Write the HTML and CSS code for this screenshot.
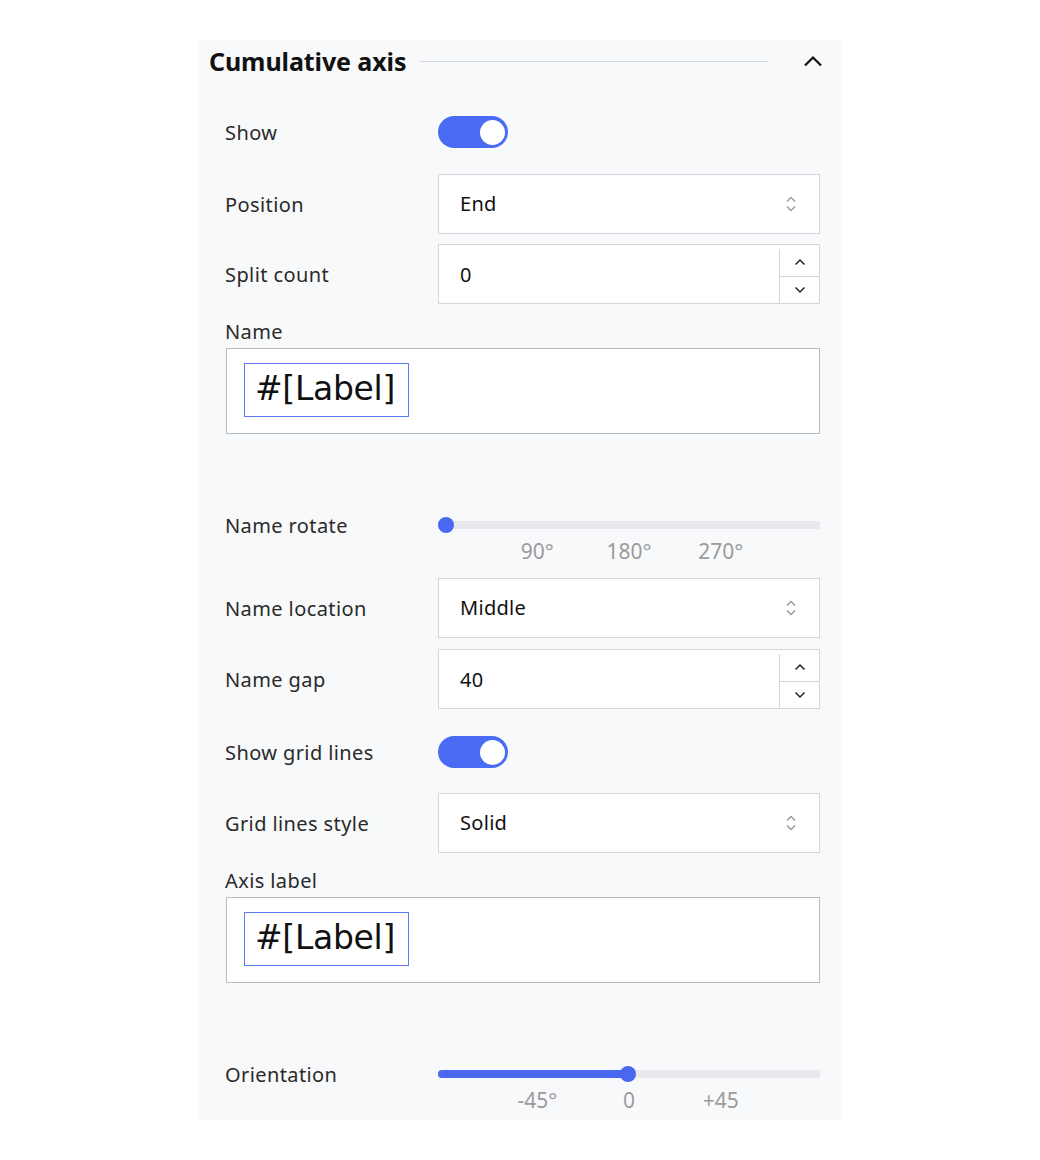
FILE: index.html
```html
<!DOCTYPE html>
<html>
<head>
<meta charset="utf-8">
<link rel="stylesheet" href="styles.css">
</head>
<body>
<div class="panel">
  <div class="header">
    <span class="title">Cumulative axis</span>
    <span class="rule"></span>
    <svg class="collapse" width="20" height="12" viewBox="0 0 20 12"><path d="M2 10.5 L10 2.5 L18 10.5" fill="none" stroke="#111" stroke-width="2.2"/></svg>
  </div>

  <div class="row r-show">
    <span class="label">Show</span>
    <span class="toggle"><span class="knob"></span></span>
  </div>

  <div class="row r-ctl r-position">
    <span class="label">Position</span>
    <div class="select">
      <span class="value">End</span>
      <svg class="updown" width="12" height="18" viewBox="0 0 12 18"><path d="M2 6.5 L6 2.5 L10 6.5 M2 11.5 L6 15.5 L10 11.5" fill="none" stroke="#9a9a9a" stroke-width="1.4"/></svg>
    </div>
  </div>

  <div class="row r-ctl r-split">
    <span class="label">Split count</span>
    <div class="number">
      <span class="value">0</span>
      <div class="spin">
        <span class="step"><svg width="12" height="8" viewBox="0 0 12 8"><path d="M1.5 6.5 L6 2 L10.5 6.5" fill="none" stroke="#222" stroke-width="1.5"/></svg></span>
        <span class="step"><svg width="12" height="8" viewBox="0 0 12 8"><path d="M1.5 1.5 L6 6 L10.5 1.5" fill="none" stroke="#222" stroke-width="1.5"/></svg></span>
      </div>
    </div>
  </div>

  <div class="stack-label r-name">Name</div>
  <div class="textbox"><span class="token">#[Label]</span></div>

  <div class="row r-slider r-rotate">
    <span class="label">Name rotate</span>
    <div class="slider">
      <span class="track"></span>
      <span class="thumb" style="left:2%"></span>
    </div>
  </div>
  <div class="ticks">
    <div class="tickarea">
      <span class="tick" style="left:26%">90°</span>
      <span class="tick" style="left:50%">180°</span>
      <span class="tick" style="left:74%">270°</span>
    </div>
  </div>

  <div class="row r-ctl r-location">
    <span class="label">Name location</span>
    <div class="select">
      <span class="value">Middle</span>
      <svg class="updown" width="12" height="18" viewBox="0 0 12 18"><path d="M2 6.5 L6 2.5 L10 6.5 M2 11.5 L6 15.5 L10 11.5" fill="none" stroke="#9a9a9a" stroke-width="1.4"/></svg>
    </div>
  </div>

  <div class="row r-ctl r-gap">
    <span class="label">Name gap</span>
    <div class="number">
      <span class="value">40</span>
      <div class="spin">
        <span class="step"><svg width="12" height="8" viewBox="0 0 12 8"><path d="M1.5 6.5 L6 2 L10.5 6.5" fill="none" stroke="#222" stroke-width="1.5"/></svg></span>
        <span class="step"><svg width="12" height="8" viewBox="0 0 12 8"><path d="M1.5 1.5 L6 6 L10.5 1.5" fill="none" stroke="#222" stroke-width="1.5"/></svg></span>
      </div>
    </div>
  </div>

  <div class="row r-grid">
    <span class="label">Show grid lines</span>
    <span class="toggle"><span class="knob"></span></span>
  </div>

  <div class="row r-ctl r-style">
    <span class="label">Grid lines style</span>
    <div class="select">
      <span class="value">Solid</span>
      <svg class="updown" width="12" height="18" viewBox="0 0 12 18"><path d="M2 6.5 L6 2.5 L10 6.5 M2 11.5 L6 15.5 L10 11.5" fill="none" stroke="#9a9a9a" stroke-width="1.4"/></svg>
    </div>
  </div>

  <div class="stack-label r-axis">Axis label</div>
  <div class="textbox"><span class="token">#[Label]</span></div>

  <div class="row r-slider r-orient">
    <span class="label">Orientation</span>
    <div class="slider">
      <span class="track"></span>
      <span class="fill" style="width:49.7%"></span>
      <span class="thumb" style="left:49.7%"></span>
    </div>
  </div>
  <div class="ticks">
    <div class="tickarea">
      <span class="tick" style="left:26%">-45°</span>
      <span class="tick" style="left:50%">0</span>
      <span class="tick" style="left:74%">+45</span>
    </div>
  </div>
</div>
</body>
</html>
```

FILE: styles.css
```css
* { box-sizing: border-box; }
html, body { margin: 0; padding: 0; background: #ffffff; }
body {
  font-family: "Noto Sans", "DejaVu Sans", sans-serif;
  color: #2a2a2a;
}
.panel {
  margin: 40px 0 0 198px;
  width: 644px;
  height: 1080px;
  background: #f8f9fb;
  padding: 0 22px 0 27px;
  display: flex;
  flex-direction: column;
}
.header {
  height: 42px;
  margin-left: -16px;
  margin-right: -3px;
  display: flex;
  align-items: center;
}
.title {
  font-size: 25px;
  font-weight: 700;
  color: #111;
  letter-spacing: -0.1px;
}
.rule {
  flex: 1;
  height: 1px;
  background: #d2d5da;
  margin: 0 35px 0 14px;
}
.collapse { display: block; }

.row {
  display: flex;
  align-items: center;
}
.label {
  width: 213px;
  flex: none;
  font-size: 20px;
  letter-spacing: 0.4px;
  color: #2a2a2a;
}
.r-show { height: 32px; margin-top: 34px; }
.r-position { margin-top: 26px; }
.r-split { margin-top: 10px; }
.r-location { margin-top: 16px; }
.r-gap { margin-top: 11px; }
.r-grid { height: 32px; margin-top: 27px; }
.r-style { margin-top: 25px; }

.toggle {
  width: 70px;
  height: 32px;
  border-radius: 16px;
  background: #4a6cf4;
  display: flex;
  align-items: center;
  justify-content: flex-end;
  padding-right: 3px;
}
.knob {
  width: 25px;
  height: 25px;
  border-radius: 50%;
  background: #fff;
}

.r-ctl { height: 60px; }
.select, .number {
  flex: 1;
  height: 100%;
  background: #fff;
  border: 1px solid #d3d6db;
  display: flex;
  align-items: center;
}
.select { padding: 0 22px 0 21px; justify-content: space-between; }
.number { padding-left: 21px; }
.value {
  font-size: 20px;
  letter-spacing: 0.3px;
  color: #111;
}
.select .value { margin-top: -2px; }
.updown { display: block; }
.number .value { flex: 1; }
.spin {
  width: 40px;
  align-self: stretch;
  border-left: 1px solid #d3d6db;
  margin-top: 4px;
  display: flex;
  flex-direction: column;
}
.step {
  flex: 1;
  display: flex;
  align-items: center;
  justify-content: center;
}
.step + .step { border-top: 1px solid #d3d6db; }
.step svg { display: block; }

.stack-label {
  font-size: 20px;
  letter-spacing: 0.4px;
  line-height: 24px;
  color: #2a2a2a;
}
.r-name { margin-top: 16px; }
.r-axis { margin-top: 16px; }
.textbox {
  margin-top: 4px;
  margin-left: 1px;
  height: 86px;
  background: #fff;
  border: 1px solid #b8bcc3;
  padding: 14px 0 0 17px;
}
.token {
  display: inline-block;
  width: 165px;
  height: 54px;
  border: 1.5px solid #5b7cf6;
  font-family: "DejaVu Sans", sans-serif;
  font-size: 33px;
  line-height: 50px;
  color: #111;
  padding-left: 10px;
  letter-spacing: -0.3px;
}

.r-slider { height: 20px; margin-top: 81px; }
.slider {
  flex: 1;
  height: 20px;
  position: relative;
}
.track {
  position: absolute;
  left: 0; right: 0;
  top: 6px;
  height: 8px;
  background: #e7e9ec;
}
.fill {
  position: absolute;
  left: 0;
  top: 6px;
  height: 8px;
  background: #4a67f0;
  border-radius: 4px 0 0 4px;
}
.thumb {
  position: absolute;
  top: 2px;
  width: 16px;
  height: 16px;
  margin-left: -8px;
  border-radius: 50%;
  background: #4a67f0;
}
.ticks {
  margin-top: 5px;
  height: 22px;
  display: flex;
}
.tickarea {
  margin-left: 213px;
  flex: 1;
  position: relative;
}
.tick {
  position: absolute;
  top: 0;
  transform: translateX(-50%);
  font-size: 21px;
  line-height: 22px;
  color: #9b9b9b;
}
```
